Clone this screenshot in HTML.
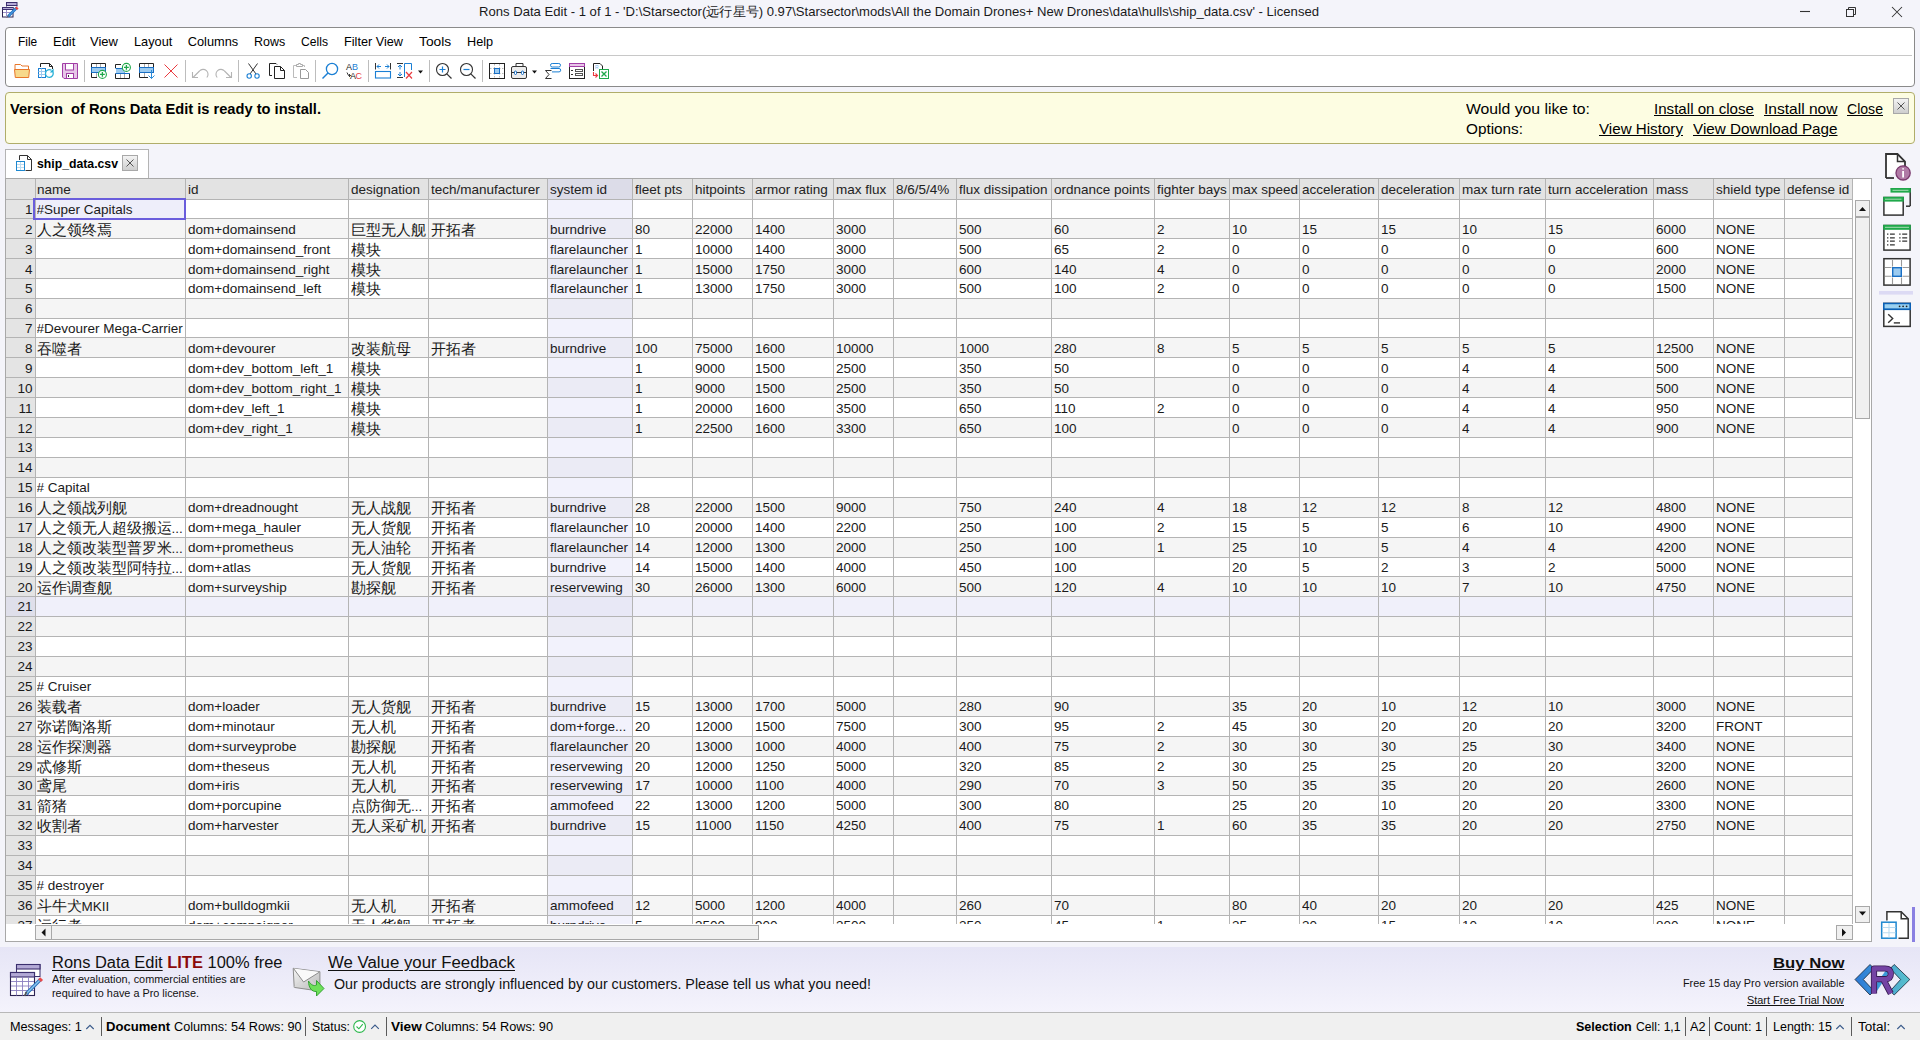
<!DOCTYPE html><html><head><meta charset="utf-8"><style>
*{margin:0;padding:0;box-sizing:border-box}
html,body{width:1920px;height:1040px;overflow:hidden}
body{position:relative;background:#f4f4fa;font-family:"Liberation Sans",sans-serif;color:#000}
div{position:absolute}
.t{white-space:pre;line-height:1}
.cj{font-size:14.5px}
.g{font-size:13.5px;color:#1a1a1a;white-space:pre;line-height:20px;overflow:hidden}
.u{text-decoration:underline;text-underline-offset:1.5px}
.u0{text-decoration:underline}
</style></head><body>
<div class="t" id="f0" style="transform:scaleX(1.0071);transform-origin:0 0;left:479.48px;top:5.00px;font-size:13px;font-weight:400;color:#1a1a1a;">Rons Data Edit - 1 of 1 - 'D:\Starsector(<span style="font-size:12.5px">远行星号</span>) 0.97\Starsector\mods\All the Domain Drones+ New Drones\data\hulls\ship_data.csv' - Licensed</div>
<div style="position:absolute;left:5px;top:27px;width:1910px;height:60px;background:#fff;border:1px solid #8a8a8a;border-radius:4px"></div>
<div style="position:absolute;left:8px;top:55px;width:1904px;height:1px;background:#c8c8c8"></div>
<svg style="position:absolute;left:0;top:0" width="640" height="90" fill="none" stroke-width="1">
<!-- folder -->
<path d="M15 69.5V64.5H20.5L22 66H28.5V69.5" stroke="#e8772a" fill="#fff"/>
<path d="M14.5 69.5H29.5L28.7 77.5H15.3Z" stroke="#e8772a" fill="#f7d98b"/>
<!-- reload doc -->
<path d="M40.5 67V63.5H49.5L52.5 66.5V69" stroke="#222"/>
<path d="M49.5 63.5V66.5H52.5" stroke="#222"/>
<rect x="38.5" y="68.5" width="7" height="9" stroke="#1a7fd4" fill="#fff"/>
<path d="M38.5 71.5H45.5M38.5 74.5H45.5M41.5 68.5V77.5" stroke="#9cc8ee"/>
<path d="M53 72.2A3.9 3.9 0 1 1 51.5 70.3" stroke="#27b0d6" stroke-width="1.3"/>
<path d="M53.6 68.6V72.4H49.8Z" fill="#27b0d6"/>
<!-- floppy -->
<path d="M62.5 63.5H77.5V78.5H64L62.5 77Z" stroke="#a23ea6" fill="#e7c6e8"/>
<rect x="65.5" y="63.5" width="8" height="6.5" stroke="#a23ea6" fill="#fff"/>
<rect x="66.5" y="73.5" width="7" height="5" stroke="#a23ea6" fill="#fff"/>
<path d="M68.5 75V77" stroke="#333"/>
<!-- table add -->
<path d="M91.5 67V63.5H105.5V67M91.5 72.5V77.5H97" stroke="#222"/>
<path d="M96.5 64V67M100.5 64V67M96.5 73V77" stroke="#aaa"/>
<rect x="91.5" y="67.5" width="14" height="5" stroke="#1a6fc4" fill="#9ccbf0"/>
<circle cx="102.4" cy="74.4" r="4" stroke="#1fa84a" fill="#fff" stroke-width="1.1"/>
<path d="M102.4 72V76.8M100 74.4H104.8" stroke="#1fa84a" stroke-width="1.3"/>
<!-- table add 2 -->
<path d="M115.5 68V64.5H121M115.5 73.5V78.5H129.5V73.5" stroke="#222"/>
<path d="M120.5 74V78M124.5 74V78" stroke="#aaa"/>
<path d="M115.5 68.5H122L125 73.5H129.5" stroke="#1a6fc4" fill="none"/>
<path d="M116 69H122L125 73H116Z" fill="#9ccbf0"/>
<path d="M115.5 73.5H129.5" stroke="#1a6fc4"/>
<circle cx="126.4" cy="67.4" r="4" stroke="#1fa84a" fill="#fff" stroke-width="1.1"/>
<path d="M126.4 65V69.8M124 67.4H128.8" stroke="#1fa84a" stroke-width="1.3"/>
<!-- table down -->
<path d="M139.5 67V63.5H153.5V67M139.5 72.5V77.5H148" stroke="#222"/>
<path d="M144.5 64V67M148.5 64V67M144.5 73V77" stroke="#aaa"/>
<rect x="139.5" y="67.5" width="14" height="5" stroke="#1a6fc4" fill="#9ccbf0"/>
<path d="M151.5 70V78.5M148.5 75.5L151.5 78.5L154.5 75.5" stroke="#2a8ad8" fill="none"/>
<!-- red X -->
<path d="M164.5 64.5L177.5 77.5M177.5 64.5L164.5 77.5" stroke="#ea3a3f"/>
<!-- seps -->
<path d="M84.5 60V82M185.5 60V82M238.5 60V82M315.5 60V82M368.5 60V82M429.5 60V82M482.5 60V82" stroke="#bdbdbd"/>
<!-- undo/redo -->
<path d="M193 77.5L199.5 71A4.2 4.2 0 0 1 206.8 77.5" stroke="#b4b4b4" stroke-width="1.1"/>
<path d="M192.5 72V77.5H198" stroke="#b4b4b4" stroke-width="1.1"/>
<path d="M231 77.5L224.5 71A4.2 4.2 0 0 0 217.2 77.5" stroke="#b4b4b4" stroke-width="1.1"/>
<path d="M231.5 72V77.5H226" stroke="#b4b4b4" stroke-width="1.1"/>
<!-- scissors -->
<path d="M248.5 63.5L256 74M257.5 63.5L250 74" stroke="#333"/>
<circle cx="249.2" cy="76" r="2.2" stroke="#1a7fd4" stroke-width="1.1"/>
<circle cx="257" cy="76" r="2.2" stroke="#1a7fd4" stroke-width="1.1"/>
<!-- copy -->
<path d="M272 75.5H269.5V63.5H276L277 64.5" stroke="#222"/>
<path d="M274.5 78.5V66.5H280.5L284.5 70.5V78.5Z" stroke="#222" fill="#fff"/>
<path d="M280.5 66.5V70.5H284.5" stroke="#222"/>
<!-- paste -->
<path d="M297 77.5H293.5V65.5H304.5V67" stroke="#bbb"/>
<path d="M296.5 66.5V64.5H298.5V63.5H300.5V64.5H302.5V66.5Z" stroke="#aaa" fill="#fff"/>
<path d="M300.5 78.5V69.5H305.5L308.5 72.5V78.5Z" stroke="#999" fill="#fff"/>
<!-- find -->
<circle cx="332" cy="69" r="5.6" stroke="#1a7fd4" stroke-width="1.3"/>
<path d="M328 73L322.5 78.5" stroke="#1a7fd4" stroke-width="1.4"/>
<!-- spell -->
<text x="346" y="69.5" font-family="Liberation Sans" font-size="9" fill="#222">A<tspan fill="#1a7fd4">B</tspan></text>
<text x="350" y="78.8" font-family="Liberation Sans" font-size="9" fill="#222" letter-spacing="-0.5">A<tspan fill="#ea3a3f">C</tspan></text>
<path d="M347 72.5L348.5 75.5H350.5M349 74L350.5 75.5L349 77" stroke="#222" stroke-width="0.9"/>
<!-- col width -->
<path d="M375.5 63V69.5M390.5 63V69.5" stroke="#333"/>
<path d="M377 66.5H381M379 64.5L377 66.5L379 68.5M389 66.5H385M387 64.5L389 66.5L387 68.5" stroke="#1a7fd4"/>
<rect x="375.5" y="71.5" width="15" height="6.5" stroke="#1a7fd4" fill="#fff" stroke-width="1.1"/>
<!-- row height x -->
<path d="M397 63.5H403M397 77.5H403" stroke="#333"/>
<path d="M400 65V69.5M398 67L400 65L402 67M400 72V76M398 74L400 76L402 74" stroke="#1a7fd4"/>
<path d="M404.5 77V63.5H411.5V70" stroke="#1a7fd4"/>
<path d="M406 72L412 78.5M412 72L406 78.5" stroke="#ea3a3f" stroke-width="1.2"/>
<path d="M418 70.5H423L420.5 73.5Z" fill="#111"/>
<!-- zoom in/out -->
<circle cx="442.5" cy="69.5" r="6" stroke="#333" stroke-width="1.1"/>
<path d="M446.8 73.8L451.5 78.5" stroke="#333" stroke-width="1.2"/>
<path d="M442.5 66.5V72.5M439.5 69.5H445.5" stroke="#1a7fd4" stroke-width="1.2"/>
<circle cx="466.5" cy="69.5" r="6" stroke="#333" stroke-width="1.1"/>
<path d="M470.8 73.8L475.5 78.5" stroke="#333" stroke-width="1.2"/>
<path d="M463.5 69.5H469.5" stroke="#1a7fd4" stroke-width="1.2"/>
<!-- grid -->
<rect x="489.5" y="63.5" width="15" height="15" stroke="#222" fill="#fff"/>
<path d="M494.5 64V78M499.5 64V78M490 68.5H504M490 73.5H504" stroke="#bbb" stroke-dasharray="1.5 1.5"/>
<rect x="494.5" y="68.5" width="5" height="5" stroke="#1a6fc4" fill="#9ccbf0"/>
<!-- toolbox -->
<path d="M516 66V63.5H523V66" stroke="#333"/>
<rect x="511.5" y="66.5" width="15" height="12" rx="1.5" stroke="#333" fill="#ececec"/>
<path d="M512 72.5H526" stroke="#333"/>
<rect x="514.5" y="71" width="2" height="3.5" rx="1" stroke="#1a6fc4" fill="#fff"/>
<rect x="521.5" y="71" width="2" height="3.5" rx="1" stroke="#1a6fc4" fill="#fff"/>
<path d="M532 70.5H537L534.5 73.5Z" fill="#111"/>
<!-- sigma -->
<path d="M551.5 70.5H545.5L549 74.5L545.5 78.5H551.5" stroke="#333"/>
<rect x="550.5" y="63.5" width="10" height="3.5" rx="1.7" stroke="#1a7fd4"/>
<path d="M550.5 68.5H559A1.7 1.7 0 0 1 559 71.9H552" stroke="#1a7fd4"/>
<!-- list form -->
<rect x="569.5" y="63.5" width="15" height="15" stroke="#222" fill="#fff"/>
<rect x="569.5" y="63.5" width="15" height="3" stroke="#a23ea6" fill="#e7c6e8"/>
<path d="M571 70.5H573M571 74.5H573" stroke="#333"/>
<rect x="575.5" y="69.5" width="7" height="2" stroke="#555"/>
<rect x="575.5" y="73.5" width="7" height="2" stroke="#555"/>
<!-- export -->
<path d="M593.5 71V63.5H600L602.5 66V69" stroke="#222"/>
<text x="595" y="69" font-family="Liberation Sans" font-size="5" fill="#7ab8ee">R</text>
<path d="M593.5 72V75.5H597M595.5 73.5L597.5 75.5L595.5 77.5" stroke="#ea3a3f" stroke-width="1.1"/>
<rect x="599.5" y="69.5" width="9" height="9" stroke="#1fa84a" fill="#fff"/>
<path d="M601.5 71.5L606.5 76.5M606.5 71.5L601.5 76.5" stroke="#1fa84a" stroke-width="1.3"/>
</svg>
<div class="t" id="f1" style="transform:scaleX(0.9309);transform-origin:0 0;left:18.29px;top:36.16px;font-size:12.8px;font-weight:400;color:#000;">File</div>
<div class="t" id="f2" style="transform:scaleX(1.0108);transform-origin:0 0;left:53.29px;top:36.16px;font-size:12.8px;font-weight:400;color:#000;">Edit</div>
<div class="t" id="f3" style="transform:scaleX(1.0103);transform-origin:0 0;left:90.49px;top:36.16px;font-size:12.8px;font-weight:400;color:#000;">View</div>
<div class="t" id="f4" style="transform:scaleX(0.9964);transform-origin:0 0;left:134.09px;top:36.16px;font-size:12.8px;font-weight:400;color:#000;">Layout</div>
<div class="t" id="f5" style="transform:scaleX(1.0000);transform-origin:0 0;left:187.69px;top:36.16px;font-size:12.8px;font-weight:400;color:#000;">Columns</div>
<div class="t" id="f6" style="transform:scaleX(0.9750);transform-origin:0 0;left:253.89px;top:36.16px;font-size:12.8px;font-weight:400;color:#000;">Rows</div>
<div class="t" id="f7" style="transform:scaleX(0.9489);transform-origin:0 0;left:301.09px;top:36.16px;font-size:12.8px;font-weight:400;color:#000;">Cells</div>
<div class="t" id="f8" style="transform:scaleX(0.9916);transform-origin:0 0;left:344.29px;top:36.16px;font-size:12.8px;font-weight:400;color:#000;">Filter View</div>
<div class="t" id="f9" style="transform:scaleX(1.0778);transform-origin:0 0;left:418.69px;top:36.16px;font-size:12.8px;font-weight:400;color:#000;">Tools</div>
<div class="t" id="f10" style="transform:scaleX(0.9913);transform-origin:0 0;left:467.39px;top:36.16px;font-size:12.8px;font-weight:400;color:#000;">Help</div>
<div style="position:absolute;left:5px;top:92px;width:1910px;height:52px;background:#fdfde2;border:1px solid #b0ad6a;border-radius:4px"></div>
<div class="t" id="f11" style="transform:scaleX(1.0039);transform-origin:0 0;left:10.42px;top:101.64px;font-size:14.6px;font-weight:700;color:#000;">Version  of Rons Data Edit is ready to install.</div>
<div class="t" id="f12" style="transform:scaleX(1.0497);transform-origin:0 0;left:1466.40px;top:101.30px;font-size:15px;font-weight:400;color:#000;">Would you like to:</div>
<div class="t" id="f13" style="transform:scaleX(1.0201);transform-origin:0 0;left:1466.40px;top:121.30px;font-size:15px;font-weight:400;color:#000;">Options:</div>
<div class="t" id="f14" style="transform:scaleX(1.0077);transform-origin:0 0;left:1653.60px;top:101.30px;font-size:15px;font-weight:400;color:#000;text-decoration:underline">Install on close</div>
<div class="t" id="f15" style="transform:scaleX(1.0370);transform-origin:0 0;left:1763.60px;top:101.30px;font-size:15px;font-weight:400;color:#000;text-decoration:underline">Install now</div>
<div class="t" id="f16" style="transform:scaleX(0.9385);transform-origin:0 0;left:1846.90px;top:101.30px;font-size:15px;font-weight:400;color:#000;text-decoration:underline">Close</div>
<div class="t" id="f17" style="transform:scaleX(1.0109);transform-origin:0 0;left:1599.40px;top:121.30px;font-size:15px;font-weight:400;color:#000;text-decoration:underline">View History</div>
<div class="t" id="f18" style="transform:scaleX(1.0153);transform-origin:0 0;left:1692.60px;top:121.30px;font-size:15px;font-weight:400;color:#000;text-decoration:underline">View Download Page</div>
<div style="position:absolute;left:5px;top:149px;width:144px;height:31px;background:#fff;border:1px solid #b4b4b4;border-bottom:none"></div>
<div class="t" id="f19" style="transform:scaleX(0.9419);transform-origin:0 0;left:36.58px;top:156.50px;font-size:13px;font-weight:700;color:#000;">ship_data.csv</div>
<div style="position:absolute;left:5px;top:178px;width:1867px;height:764px;background:#fff;border:1px solid #a8a8a8"></div>
<div style="position:absolute;left:6px;top:179px;width:1846px;height:20px;background:#e3e3e3"></div>
<div style="position:absolute;left:548px;top:179px;width:84px;height:20px;background:#dcdce8"></div>
<div style="position:absolute;left:36px;top:200px;width:1816px;height:18px;background:#ffffff"></div>
<div style="position:absolute;left:6px;top:200px;width:29px;height:18px;background:#e4e4e4"></div>
<div style="position:absolute;left:548px;top:200px;width:84px;height:18px;background:#f2f2fc"></div>
<div style="position:absolute;left:35px;top:200px;width:150px;height:18px;background:#eeeefa"></div>
<div style="position:absolute;left:36px;top:219px;width:1816px;height:19px;background:#f5f5f5"></div>
<div style="position:absolute;left:6px;top:219px;width:29px;height:19px;background:#e4e4e4"></div>
<div style="position:absolute;left:548px;top:219px;width:84px;height:19px;background:#ebebf5"></div>
<div style="position:absolute;left:36px;top:239px;width:1816px;height:19px;background:#ffffff"></div>
<div style="position:absolute;left:6px;top:239px;width:29px;height:19px;background:#e4e4e4"></div>
<div style="position:absolute;left:548px;top:239px;width:84px;height:19px;background:#f2f2fc"></div>
<div style="position:absolute;left:36px;top:259px;width:1816px;height:19px;background:#f5f5f5"></div>
<div style="position:absolute;left:6px;top:259px;width:29px;height:19px;background:#e4e4e4"></div>
<div style="position:absolute;left:548px;top:259px;width:84px;height:19px;background:#ebebf5"></div>
<div style="position:absolute;left:36px;top:279px;width:1816px;height:19px;background:#ffffff"></div>
<div style="position:absolute;left:6px;top:279px;width:29px;height:19px;background:#e4e4e4"></div>
<div style="position:absolute;left:548px;top:279px;width:84px;height:19px;background:#f2f2fc"></div>
<div style="position:absolute;left:36px;top:299px;width:1816px;height:19px;background:#f5f5f5"></div>
<div style="position:absolute;left:6px;top:299px;width:29px;height:19px;background:#e4e4e4"></div>
<div style="position:absolute;left:548px;top:299px;width:84px;height:19px;background:#ebebf5"></div>
<div style="position:absolute;left:36px;top:319px;width:1816px;height:18px;background:#ffffff"></div>
<div style="position:absolute;left:6px;top:319px;width:29px;height:18px;background:#e4e4e4"></div>
<div style="position:absolute;left:548px;top:319px;width:84px;height:18px;background:#f2f2fc"></div>
<div style="position:absolute;left:36px;top:338px;width:1816px;height:19px;background:#f5f5f5"></div>
<div style="position:absolute;left:6px;top:338px;width:29px;height:19px;background:#e4e4e4"></div>
<div style="position:absolute;left:548px;top:338px;width:84px;height:19px;background:#ebebf5"></div>
<div style="position:absolute;left:36px;top:358px;width:1816px;height:19px;background:#ffffff"></div>
<div style="position:absolute;left:6px;top:358px;width:29px;height:19px;background:#e4e4e4"></div>
<div style="position:absolute;left:548px;top:358px;width:84px;height:19px;background:#f2f2fc"></div>
<div style="position:absolute;left:36px;top:378px;width:1816px;height:19px;background:#f5f5f5"></div>
<div style="position:absolute;left:6px;top:378px;width:29px;height:19px;background:#e4e4e4"></div>
<div style="position:absolute;left:548px;top:378px;width:84px;height:19px;background:#ebebf5"></div>
<div style="position:absolute;left:36px;top:398px;width:1816px;height:19px;background:#ffffff"></div>
<div style="position:absolute;left:6px;top:398px;width:29px;height:19px;background:#e4e4e4"></div>
<div style="position:absolute;left:548px;top:398px;width:84px;height:19px;background:#f2f2fc"></div>
<div style="position:absolute;left:36px;top:418px;width:1816px;height:19px;background:#f5f5f5"></div>
<div style="position:absolute;left:6px;top:418px;width:29px;height:19px;background:#e4e4e4"></div>
<div style="position:absolute;left:548px;top:418px;width:84px;height:19px;background:#ebebf5"></div>
<div style="position:absolute;left:36px;top:438px;width:1816px;height:19px;background:#ffffff"></div>
<div style="position:absolute;left:6px;top:438px;width:29px;height:19px;background:#e4e4e4"></div>
<div style="position:absolute;left:548px;top:438px;width:84px;height:19px;background:#f2f2fc"></div>
<div style="position:absolute;left:36px;top:458px;width:1816px;height:19px;background:#f5f5f5"></div>
<div style="position:absolute;left:6px;top:458px;width:29px;height:19px;background:#e4e4e4"></div>
<div style="position:absolute;left:548px;top:458px;width:84px;height:19px;background:#ebebf5"></div>
<div style="position:absolute;left:36px;top:478px;width:1816px;height:19px;background:#ffffff"></div>
<div style="position:absolute;left:6px;top:478px;width:29px;height:19px;background:#e4e4e4"></div>
<div style="position:absolute;left:548px;top:478px;width:84px;height:19px;background:#f2f2fc"></div>
<div style="position:absolute;left:36px;top:498px;width:1816px;height:19px;background:#f5f5f5"></div>
<div style="position:absolute;left:6px;top:498px;width:29px;height:19px;background:#e4e4e4"></div>
<div style="position:absolute;left:548px;top:498px;width:84px;height:19px;background:#ebebf5"></div>
<div style="position:absolute;left:36px;top:518px;width:1816px;height:19px;background:#ffffff"></div>
<div style="position:absolute;left:6px;top:518px;width:29px;height:19px;background:#e4e4e4"></div>
<div style="position:absolute;left:548px;top:518px;width:84px;height:19px;background:#f2f2fc"></div>
<div style="position:absolute;left:36px;top:538px;width:1816px;height:19px;background:#f5f5f5"></div>
<div style="position:absolute;left:6px;top:538px;width:29px;height:19px;background:#e4e4e4"></div>
<div style="position:absolute;left:548px;top:538px;width:84px;height:19px;background:#ebebf5"></div>
<div style="position:absolute;left:36px;top:558px;width:1816px;height:18px;background:#ffffff"></div>
<div style="position:absolute;left:6px;top:558px;width:29px;height:18px;background:#e4e4e4"></div>
<div style="position:absolute;left:548px;top:558px;width:84px;height:18px;background:#f2f2fc"></div>
<div style="position:absolute;left:36px;top:577px;width:1816px;height:19px;background:#f5f5f5"></div>
<div style="position:absolute;left:6px;top:577px;width:29px;height:19px;background:#e4e4e4"></div>
<div style="position:absolute;left:548px;top:577px;width:84px;height:19px;background:#ebebf5"></div>
<div style="position:absolute;left:36px;top:597px;width:1816px;height:19px;background:#f0f0fa"></div>
<div style="position:absolute;left:6px;top:597px;width:29px;height:19px;background:#dfdfea"></div>
<div style="position:absolute;left:548px;top:597px;width:84px;height:19px;background:#e8e8f6"></div>
<div style="position:absolute;left:36px;top:617px;width:1816px;height:19px;background:#f5f5f5"></div>
<div style="position:absolute;left:6px;top:617px;width:29px;height:19px;background:#e4e4e4"></div>
<div style="position:absolute;left:548px;top:617px;width:84px;height:19px;background:#ebebf5"></div>
<div style="position:absolute;left:36px;top:637px;width:1816px;height:19px;background:#ffffff"></div>
<div style="position:absolute;left:6px;top:637px;width:29px;height:19px;background:#e4e4e4"></div>
<div style="position:absolute;left:548px;top:637px;width:84px;height:19px;background:#f2f2fc"></div>
<div style="position:absolute;left:36px;top:657px;width:1816px;height:19px;background:#f5f5f5"></div>
<div style="position:absolute;left:6px;top:657px;width:29px;height:19px;background:#e4e4e4"></div>
<div style="position:absolute;left:548px;top:657px;width:84px;height:19px;background:#ebebf5"></div>
<div style="position:absolute;left:36px;top:677px;width:1816px;height:19px;background:#ffffff"></div>
<div style="position:absolute;left:6px;top:677px;width:29px;height:19px;background:#e4e4e4"></div>
<div style="position:absolute;left:548px;top:677px;width:84px;height:19px;background:#f2f2fc"></div>
<div style="position:absolute;left:36px;top:697px;width:1816px;height:19px;background:#f5f5f5"></div>
<div style="position:absolute;left:6px;top:697px;width:29px;height:19px;background:#e4e4e4"></div>
<div style="position:absolute;left:548px;top:697px;width:84px;height:19px;background:#ebebf5"></div>
<div style="position:absolute;left:36px;top:717px;width:1816px;height:19px;background:#ffffff"></div>
<div style="position:absolute;left:6px;top:717px;width:29px;height:19px;background:#e4e4e4"></div>
<div style="position:absolute;left:548px;top:717px;width:84px;height:19px;background:#f2f2fc"></div>
<div style="position:absolute;left:36px;top:737px;width:1816px;height:19px;background:#f5f5f5"></div>
<div style="position:absolute;left:6px;top:737px;width:29px;height:19px;background:#e4e4e4"></div>
<div style="position:absolute;left:548px;top:737px;width:84px;height:19px;background:#ebebf5"></div>
<div style="position:absolute;left:36px;top:757px;width:1816px;height:19px;background:#ffffff"></div>
<div style="position:absolute;left:6px;top:757px;width:29px;height:19px;background:#e4e4e4"></div>
<div style="position:absolute;left:548px;top:757px;width:84px;height:19px;background:#f2f2fc"></div>
<div style="position:absolute;left:36px;top:777px;width:1816px;height:18px;background:#f5f5f5"></div>
<div style="position:absolute;left:6px;top:777px;width:29px;height:18px;background:#e4e4e4"></div>
<div style="position:absolute;left:548px;top:777px;width:84px;height:18px;background:#ebebf5"></div>
<div style="position:absolute;left:36px;top:796px;width:1816px;height:19px;background:#ffffff"></div>
<div style="position:absolute;left:6px;top:796px;width:29px;height:19px;background:#e4e4e4"></div>
<div style="position:absolute;left:548px;top:796px;width:84px;height:19px;background:#f2f2fc"></div>
<div style="position:absolute;left:36px;top:816px;width:1816px;height:19px;background:#f5f5f5"></div>
<div style="position:absolute;left:6px;top:816px;width:29px;height:19px;background:#e4e4e4"></div>
<div style="position:absolute;left:548px;top:816px;width:84px;height:19px;background:#ebebf5"></div>
<div style="position:absolute;left:36px;top:836px;width:1816px;height:19px;background:#ffffff"></div>
<div style="position:absolute;left:6px;top:836px;width:29px;height:19px;background:#e4e4e4"></div>
<div style="position:absolute;left:548px;top:836px;width:84px;height:19px;background:#f2f2fc"></div>
<div style="position:absolute;left:36px;top:856px;width:1816px;height:19px;background:#f5f5f5"></div>
<div style="position:absolute;left:6px;top:856px;width:29px;height:19px;background:#e4e4e4"></div>
<div style="position:absolute;left:548px;top:856px;width:84px;height:19px;background:#ebebf5"></div>
<div style="position:absolute;left:36px;top:876px;width:1816px;height:19px;background:#ffffff"></div>
<div style="position:absolute;left:6px;top:876px;width:29px;height:19px;background:#e4e4e4"></div>
<div style="position:absolute;left:548px;top:876px;width:84px;height:19px;background:#f2f2fc"></div>
<div style="position:absolute;left:36px;top:896px;width:1816px;height:19px;background:#f5f5f5"></div>
<div style="position:absolute;left:6px;top:896px;width:29px;height:19px;background:#e4e4e4"></div>
<div style="position:absolute;left:548px;top:896px;width:84px;height:19px;background:#ebebf5"></div>
<div style="position:absolute;left:36px;top:916px;width:1816px;height:8px;background:#ffffff"></div>
<div style="position:absolute;left:6px;top:916px;width:29px;height:8px;background:#e4e4e4"></div>
<div style="position:absolute;left:548px;top:916px;width:84px;height:8px;background:#f2f2fc"></div>
<div style="position:absolute;left:35px;top:179px;width:1px;height:745px;background:#b4b4b4"></div>
<div style="position:absolute;left:185px;top:179px;width:1px;height:745px;background:#b4b4b4"></div>
<div style="position:absolute;left:348px;top:179px;width:1px;height:745px;background:#b4b4b4"></div>
<div style="position:absolute;left:428px;top:179px;width:1px;height:745px;background:#b4b4b4"></div>
<div style="position:absolute;left:547px;top:179px;width:1px;height:745px;background:#b4b4b4"></div>
<div style="position:absolute;left:632px;top:179px;width:1px;height:745px;background:#b4b4b4"></div>
<div style="position:absolute;left:692px;top:179px;width:1px;height:745px;background:#b4b4b4"></div>
<div style="position:absolute;left:752px;top:179px;width:1px;height:745px;background:#b4b4b4"></div>
<div style="position:absolute;left:833px;top:179px;width:1px;height:745px;background:#b4b4b4"></div>
<div style="position:absolute;left:893px;top:179px;width:1px;height:745px;background:#b4b4b4"></div>
<div style="position:absolute;left:956px;top:179px;width:1px;height:745px;background:#b4b4b4"></div>
<div style="position:absolute;left:1051px;top:179px;width:1px;height:745px;background:#b4b4b4"></div>
<div style="position:absolute;left:1154px;top:179px;width:1px;height:745px;background:#b4b4b4"></div>
<div style="position:absolute;left:1229px;top:179px;width:1px;height:745px;background:#b4b4b4"></div>
<div style="position:absolute;left:1299px;top:179px;width:1px;height:745px;background:#b4b4b4"></div>
<div style="position:absolute;left:1378px;top:179px;width:1px;height:745px;background:#b4b4b4"></div>
<div style="position:absolute;left:1459px;top:179px;width:1px;height:745px;background:#b4b4b4"></div>
<div style="position:absolute;left:1545px;top:179px;width:1px;height:745px;background:#b4b4b4"></div>
<div style="position:absolute;left:1653px;top:179px;width:1px;height:745px;background:#b4b4b4"></div>
<div style="position:absolute;left:1713px;top:179px;width:1px;height:745px;background:#b4b4b4"></div>
<div style="position:absolute;left:1784px;top:179px;width:1px;height:745px;background:#b4b4b4"></div>
<div style="position:absolute;left:1852px;top:179px;width:1px;height:745px;background:#b4b4b4"></div>
<div style="position:absolute;left:6px;top:199px;width:1847px;height:1px;background:#b4b4b4"></div>
<div style="position:absolute;left:6px;top:218px;width:1847px;height:1px;background:#b4b4b4"></div>
<div style="position:absolute;left:6px;top:238px;width:1847px;height:1px;background:#b4b4b4"></div>
<div style="position:absolute;left:6px;top:258px;width:1847px;height:1px;background:#b4b4b4"></div>
<div style="position:absolute;left:6px;top:278px;width:1847px;height:1px;background:#b4b4b4"></div>
<div style="position:absolute;left:6px;top:298px;width:1847px;height:1px;background:#b4b4b4"></div>
<div style="position:absolute;left:6px;top:318px;width:1847px;height:1px;background:#b4b4b4"></div>
<div style="position:absolute;left:6px;top:337px;width:1847px;height:1px;background:#b4b4b4"></div>
<div style="position:absolute;left:6px;top:357px;width:1847px;height:1px;background:#b4b4b4"></div>
<div style="position:absolute;left:6px;top:377px;width:1847px;height:1px;background:#b4b4b4"></div>
<div style="position:absolute;left:6px;top:397px;width:1847px;height:1px;background:#b4b4b4"></div>
<div style="position:absolute;left:6px;top:417px;width:1847px;height:1px;background:#b4b4b4"></div>
<div style="position:absolute;left:6px;top:437px;width:1847px;height:1px;background:#b4b4b4"></div>
<div style="position:absolute;left:6px;top:457px;width:1847px;height:1px;background:#b4b4b4"></div>
<div style="position:absolute;left:6px;top:477px;width:1847px;height:1px;background:#b4b4b4"></div>
<div style="position:absolute;left:6px;top:497px;width:1847px;height:1px;background:#b4b4b4"></div>
<div style="position:absolute;left:6px;top:517px;width:1847px;height:1px;background:#b4b4b4"></div>
<div style="position:absolute;left:6px;top:537px;width:1847px;height:1px;background:#b4b4b4"></div>
<div style="position:absolute;left:6px;top:557px;width:1847px;height:1px;background:#b4b4b4"></div>
<div style="position:absolute;left:6px;top:576px;width:1847px;height:1px;background:#b4b4b4"></div>
<div style="position:absolute;left:6px;top:596px;width:1847px;height:1px;background:#b4b4b4"></div>
<div style="position:absolute;left:6px;top:616px;width:1847px;height:1px;background:#b4b4b4"></div>
<div style="position:absolute;left:6px;top:636px;width:1847px;height:1px;background:#b4b4b4"></div>
<div style="position:absolute;left:6px;top:656px;width:1847px;height:1px;background:#b4b4b4"></div>
<div style="position:absolute;left:6px;top:676px;width:1847px;height:1px;background:#b4b4b4"></div>
<div style="position:absolute;left:6px;top:696px;width:1847px;height:1px;background:#b4b4b4"></div>
<div style="position:absolute;left:6px;top:716px;width:1847px;height:1px;background:#b4b4b4"></div>
<div style="position:absolute;left:6px;top:736px;width:1847px;height:1px;background:#b4b4b4"></div>
<div style="position:absolute;left:6px;top:756px;width:1847px;height:1px;background:#b4b4b4"></div>
<div style="position:absolute;left:6px;top:776px;width:1847px;height:1px;background:#b4b4b4"></div>
<div style="position:absolute;left:6px;top:795px;width:1847px;height:1px;background:#b4b4b4"></div>
<div style="position:absolute;left:6px;top:815px;width:1847px;height:1px;background:#b4b4b4"></div>
<div style="position:absolute;left:6px;top:835px;width:1847px;height:1px;background:#b4b4b4"></div>
<div style="position:absolute;left:6px;top:855px;width:1847px;height:1px;background:#b4b4b4"></div>
<div style="position:absolute;left:6px;top:875px;width:1847px;height:1px;background:#b4b4b4"></div>
<div style="position:absolute;left:6px;top:895px;width:1847px;height:1px;background:#b4b4b4"></div>
<div style="position:absolute;left:6px;top:915px;width:1847px;height:1px;background:#b4b4b4"></div>
<div class="g" style="left:37px;top:180px;width:147px;height:19px;color:#222">name</div>
<div class="g" style="left:188px;top:180px;width:160px;height:19px;color:#222">id</div>
<div class="g" style="left:351px;top:180px;width:77px;height:19px;color:#222">designation</div>
<div class="g" style="left:431px;top:180px;width:116px;height:19px;color:#222">tech/manufacturer</div>
<div class="g" style="left:550px;top:180px;width:82px;height:19px;color:#222">system id</div>
<div class="g" style="left:635px;top:180px;width:57px;height:19px;color:#222">fleet pts</div>
<div class="g" style="left:695px;top:180px;width:57px;height:19px;color:#222">hitpoints</div>
<div class="g" style="left:755px;top:180px;width:78px;height:19px;color:#222">armor rating</div>
<div class="g" style="left:836px;top:180px;width:57px;height:19px;color:#222">max flux</div>
<div class="g" style="left:896px;top:180px;width:60px;height:19px;color:#222">8/6/5/4%</div>
<div class="g" style="left:959px;top:180px;width:92px;height:19px;color:#222">flux dissipation</div>
<div class="g" style="left:1054px;top:180px;width:100px;height:19px;color:#222">ordnance points</div>
<div class="g" style="left:1157px;top:180px;width:72px;height:19px;color:#222">fighter bays</div>
<div class="g" style="left:1232px;top:180px;width:67px;height:19px;color:#222">max speed</div>
<div class="g" style="left:1302px;top:180px;width:76px;height:19px;color:#222">acceleration</div>
<div class="g" style="left:1381px;top:180px;width:78px;height:19px;color:#222">deceleration</div>
<div class="g" style="left:1462px;top:180px;width:83px;height:19px;color:#222">max turn rate</div>
<div class="g" style="left:1548px;top:180px;width:105px;height:19px;color:#222">turn acceleration</div>
<div class="g" style="left:1656px;top:180px;width:57px;height:19px;color:#222">mass</div>
<div class="g" style="left:1716px;top:180px;width:68px;height:19px;color:#222">shield type</div>
<div class="g" style="left:1787px;top:180px;width:65px;height:19px;color:#222">defense id</div>
<div class="g" style="left:6px;top:200px;width:26.5px;height:18px;text-align:right">1</div>
<div class="g" style="left:36.5px;top:200px;width:400px;height:18px">#Super Capitals</div>
<div class="g" style="left:6px;top:220px;width:26.5px;height:18px;text-align:right">2</div>
<div class="g" style="left:36.5px;top:220px;width:147px;height:18px"><span class="cj">人之领终焉</span></div>
<div class="g" style="left:188px;top:220px;width:160px;height:18px">dom+domainsend</div>
<div class="g" style="left:351px;top:220px;width:77px;height:18px"><span class="cj">巨型无人舰</span></div>
<div class="g" style="left:431px;top:220px;width:116px;height:18px"><span class="cj">开拓者</span></div>
<div class="g" style="left:550px;top:220px;width:82px;height:18px">burndrive</div>
<div class="g" style="left:635px;top:220px;width:57px;height:18px">80</div>
<div class="g" style="left:695px;top:220px;width:57px;height:18px">22000</div>
<div class="g" style="left:755px;top:220px;width:78px;height:18px">1400</div>
<div class="g" style="left:836px;top:220px;width:57px;height:18px">3000</div>
<div class="g" style="left:959px;top:220px;width:92px;height:18px">500</div>
<div class="g" style="left:1054px;top:220px;width:100px;height:18px">60</div>
<div class="g" style="left:1157px;top:220px;width:72px;height:18px">2</div>
<div class="g" style="left:1232px;top:220px;width:67px;height:18px">10</div>
<div class="g" style="left:1302px;top:220px;width:76px;height:18px">15</div>
<div class="g" style="left:1381px;top:220px;width:78px;height:18px">15</div>
<div class="g" style="left:1462px;top:220px;width:83px;height:18px">10</div>
<div class="g" style="left:1548px;top:220px;width:105px;height:18px">15</div>
<div class="g" style="left:1656px;top:220px;width:57px;height:18px">6000</div>
<div class="g" style="left:1716px;top:220px;width:68px;height:18px">NONE</div>
<div class="g" style="left:6px;top:240px;width:26.5px;height:18px;text-align:right">3</div>
<div class="g" style="left:188px;top:240px;width:160px;height:18px">dom+domainsend_front</div>
<div class="g" style="left:351px;top:240px;width:77px;height:18px"><span class="cj">模块</span></div>
<div class="g" style="left:550px;top:240px;width:82px;height:18px">flarelauncher</div>
<div class="g" style="left:635px;top:240px;width:57px;height:18px">1</div>
<div class="g" style="left:695px;top:240px;width:57px;height:18px">10000</div>
<div class="g" style="left:755px;top:240px;width:78px;height:18px">1400</div>
<div class="g" style="left:836px;top:240px;width:57px;height:18px">3000</div>
<div class="g" style="left:959px;top:240px;width:92px;height:18px">500</div>
<div class="g" style="left:1054px;top:240px;width:100px;height:18px">65</div>
<div class="g" style="left:1157px;top:240px;width:72px;height:18px">2</div>
<div class="g" style="left:1232px;top:240px;width:67px;height:18px">0</div>
<div class="g" style="left:1302px;top:240px;width:76px;height:18px">0</div>
<div class="g" style="left:1381px;top:240px;width:78px;height:18px">0</div>
<div class="g" style="left:1462px;top:240px;width:83px;height:18px">0</div>
<div class="g" style="left:1548px;top:240px;width:105px;height:18px">0</div>
<div class="g" style="left:1656px;top:240px;width:57px;height:18px">600</div>
<div class="g" style="left:1716px;top:240px;width:68px;height:18px">NONE</div>
<div class="g" style="left:6px;top:260px;width:26.5px;height:18px;text-align:right">4</div>
<div class="g" style="left:188px;top:260px;width:160px;height:18px">dom+domainsend_right</div>
<div class="g" style="left:351px;top:260px;width:77px;height:18px"><span class="cj">模块</span></div>
<div class="g" style="left:550px;top:260px;width:82px;height:18px">flarelauncher</div>
<div class="g" style="left:635px;top:260px;width:57px;height:18px">1</div>
<div class="g" style="left:695px;top:260px;width:57px;height:18px">15000</div>
<div class="g" style="left:755px;top:260px;width:78px;height:18px">1750</div>
<div class="g" style="left:836px;top:260px;width:57px;height:18px">3000</div>
<div class="g" style="left:959px;top:260px;width:92px;height:18px">600</div>
<div class="g" style="left:1054px;top:260px;width:100px;height:18px">140</div>
<div class="g" style="left:1157px;top:260px;width:72px;height:18px">4</div>
<div class="g" style="left:1232px;top:260px;width:67px;height:18px">0</div>
<div class="g" style="left:1302px;top:260px;width:76px;height:18px">0</div>
<div class="g" style="left:1381px;top:260px;width:78px;height:18px">0</div>
<div class="g" style="left:1462px;top:260px;width:83px;height:18px">0</div>
<div class="g" style="left:1548px;top:260px;width:105px;height:18px">0</div>
<div class="g" style="left:1656px;top:260px;width:57px;height:18px">2000</div>
<div class="g" style="left:1716px;top:260px;width:68px;height:18px">NONE</div>
<div class="g" style="left:6px;top:279px;width:26.5px;height:19px;text-align:right">5</div>
<div class="g" style="left:188px;top:279px;width:160px;height:19px">dom+domainsend_left</div>
<div class="g" style="left:351px;top:279px;width:77px;height:19px"><span class="cj">模块</span></div>
<div class="g" style="left:550px;top:279px;width:82px;height:19px">flarelauncher</div>
<div class="g" style="left:635px;top:279px;width:57px;height:19px">1</div>
<div class="g" style="left:695px;top:279px;width:57px;height:19px">13000</div>
<div class="g" style="left:755px;top:279px;width:78px;height:19px">1750</div>
<div class="g" style="left:836px;top:279px;width:57px;height:19px">3000</div>
<div class="g" style="left:959px;top:279px;width:92px;height:19px">500</div>
<div class="g" style="left:1054px;top:279px;width:100px;height:19px">100</div>
<div class="g" style="left:1157px;top:279px;width:72px;height:19px">2</div>
<div class="g" style="left:1232px;top:279px;width:67px;height:19px">0</div>
<div class="g" style="left:1302px;top:279px;width:76px;height:19px">0</div>
<div class="g" style="left:1381px;top:279px;width:78px;height:19px">0</div>
<div class="g" style="left:1462px;top:279px;width:83px;height:19px">0</div>
<div class="g" style="left:1548px;top:279px;width:105px;height:19px">0</div>
<div class="g" style="left:1656px;top:279px;width:57px;height:19px">1500</div>
<div class="g" style="left:1716px;top:279px;width:68px;height:19px">NONE</div>
<div class="g" style="left:6px;top:299px;width:26.5px;height:19px;text-align:right">6</div>
<div class="g" style="left:6px;top:319px;width:26.5px;height:18px;text-align:right">7</div>
<div class="g" style="left:36.5px;top:319px;width:400px;height:18px">#Devourer Mega-Carrier</div>
<div class="g" style="left:6px;top:339px;width:26.5px;height:18px;text-align:right">8</div>
<div class="g" style="left:36.5px;top:339px;width:147px;height:18px"><span class="cj">吞噬者</span></div>
<div class="g" style="left:188px;top:339px;width:160px;height:18px">dom+devourer</div>
<div class="g" style="left:351px;top:339px;width:77px;height:18px"><span class="cj">改装航母</span></div>
<div class="g" style="left:431px;top:339px;width:116px;height:18px"><span class="cj">开拓者</span></div>
<div class="g" style="left:550px;top:339px;width:82px;height:18px">burndrive</div>
<div class="g" style="left:635px;top:339px;width:57px;height:18px">100</div>
<div class="g" style="left:695px;top:339px;width:57px;height:18px">75000</div>
<div class="g" style="left:755px;top:339px;width:78px;height:18px">1600</div>
<div class="g" style="left:836px;top:339px;width:57px;height:18px">10000</div>
<div class="g" style="left:959px;top:339px;width:92px;height:18px">1000</div>
<div class="g" style="left:1054px;top:339px;width:100px;height:18px">280</div>
<div class="g" style="left:1157px;top:339px;width:72px;height:18px">8</div>
<div class="g" style="left:1232px;top:339px;width:67px;height:18px">5</div>
<div class="g" style="left:1302px;top:339px;width:76px;height:18px">5</div>
<div class="g" style="left:1381px;top:339px;width:78px;height:18px">5</div>
<div class="g" style="left:1462px;top:339px;width:83px;height:18px">5</div>
<div class="g" style="left:1548px;top:339px;width:105px;height:18px">5</div>
<div class="g" style="left:1656px;top:339px;width:57px;height:18px">12500</div>
<div class="g" style="left:1716px;top:339px;width:68px;height:18px">NONE</div>
<div class="g" style="left:6px;top:359px;width:26.5px;height:18px;text-align:right">9</div>
<div class="g" style="left:188px;top:359px;width:160px;height:18px">dom+dev_bottom_left_1</div>
<div class="g" style="left:351px;top:359px;width:77px;height:18px"><span class="cj">模块</span></div>
<div class="g" style="left:635px;top:359px;width:57px;height:18px">1</div>
<div class="g" style="left:695px;top:359px;width:57px;height:18px">9000</div>
<div class="g" style="left:755px;top:359px;width:78px;height:18px">1500</div>
<div class="g" style="left:836px;top:359px;width:57px;height:18px">2500</div>
<div class="g" style="left:959px;top:359px;width:92px;height:18px">350</div>
<div class="g" style="left:1054px;top:359px;width:100px;height:18px">50</div>
<div class="g" style="left:1232px;top:359px;width:67px;height:18px">0</div>
<div class="g" style="left:1302px;top:359px;width:76px;height:18px">0</div>
<div class="g" style="left:1381px;top:359px;width:78px;height:18px">0</div>
<div class="g" style="left:1462px;top:359px;width:83px;height:18px">4</div>
<div class="g" style="left:1548px;top:359px;width:105px;height:18px">4</div>
<div class="g" style="left:1656px;top:359px;width:57px;height:18px">500</div>
<div class="g" style="left:1716px;top:359px;width:68px;height:18px">NONE</div>
<div class="g" style="left:6px;top:379px;width:26.5px;height:18px;text-align:right">10</div>
<div class="g" style="left:188px;top:379px;width:160px;height:18px">dom+dev_bottom_right_1</div>
<div class="g" style="left:351px;top:379px;width:77px;height:18px"><span class="cj">模块</span></div>
<div class="g" style="left:635px;top:379px;width:57px;height:18px">1</div>
<div class="g" style="left:695px;top:379px;width:57px;height:18px">9000</div>
<div class="g" style="left:755px;top:379px;width:78px;height:18px">1500</div>
<div class="g" style="left:836px;top:379px;width:57px;height:18px">2500</div>
<div class="g" style="left:959px;top:379px;width:92px;height:18px">350</div>
<div class="g" style="left:1054px;top:379px;width:100px;height:18px">50</div>
<div class="g" style="left:1232px;top:379px;width:67px;height:18px">0</div>
<div class="g" style="left:1302px;top:379px;width:76px;height:18px">0</div>
<div class="g" style="left:1381px;top:379px;width:78px;height:18px">0</div>
<div class="g" style="left:1462px;top:379px;width:83px;height:18px">4</div>
<div class="g" style="left:1548px;top:379px;width:105px;height:18px">4</div>
<div class="g" style="left:1656px;top:379px;width:57px;height:18px">500</div>
<div class="g" style="left:1716px;top:379px;width:68px;height:18px">NONE</div>
<div class="g" style="left:6px;top:399px;width:26.5px;height:18px;text-align:right">11</div>
<div class="g" style="left:188px;top:399px;width:160px;height:18px">dom+dev_left_1</div>
<div class="g" style="left:351px;top:399px;width:77px;height:18px"><span class="cj">模块</span></div>
<div class="g" style="left:635px;top:399px;width:57px;height:18px">1</div>
<div class="g" style="left:695px;top:399px;width:57px;height:18px">20000</div>
<div class="g" style="left:755px;top:399px;width:78px;height:18px">1600</div>
<div class="g" style="left:836px;top:399px;width:57px;height:18px">3500</div>
<div class="g" style="left:959px;top:399px;width:92px;height:18px">650</div>
<div class="g" style="left:1054px;top:399px;width:100px;height:18px">110</div>
<div class="g" style="left:1157px;top:399px;width:72px;height:18px">2</div>
<div class="g" style="left:1232px;top:399px;width:67px;height:18px">0</div>
<div class="g" style="left:1302px;top:399px;width:76px;height:18px">0</div>
<div class="g" style="left:1381px;top:399px;width:78px;height:18px">0</div>
<div class="g" style="left:1462px;top:399px;width:83px;height:18px">4</div>
<div class="g" style="left:1548px;top:399px;width:105px;height:18px">4</div>
<div class="g" style="left:1656px;top:399px;width:57px;height:18px">950</div>
<div class="g" style="left:1716px;top:399px;width:68px;height:18px">NONE</div>
<div class="g" style="left:6px;top:419px;width:26.5px;height:18px;text-align:right">12</div>
<div class="g" style="left:188px;top:419px;width:160px;height:18px">dom+dev_right_1</div>
<div class="g" style="left:351px;top:419px;width:77px;height:18px"><span class="cj">模块</span></div>
<div class="g" style="left:635px;top:419px;width:57px;height:18px">1</div>
<div class="g" style="left:695px;top:419px;width:57px;height:18px">22500</div>
<div class="g" style="left:755px;top:419px;width:78px;height:18px">1600</div>
<div class="g" style="left:836px;top:419px;width:57px;height:18px">3300</div>
<div class="g" style="left:959px;top:419px;width:92px;height:18px">650</div>
<div class="g" style="left:1054px;top:419px;width:100px;height:18px">100</div>
<div class="g" style="left:1232px;top:419px;width:67px;height:18px">0</div>
<div class="g" style="left:1302px;top:419px;width:76px;height:18px">0</div>
<div class="g" style="left:1381px;top:419px;width:78px;height:18px">0</div>
<div class="g" style="left:1462px;top:419px;width:83px;height:18px">4</div>
<div class="g" style="left:1548px;top:419px;width:105px;height:18px">4</div>
<div class="g" style="left:1656px;top:419px;width:57px;height:18px">900</div>
<div class="g" style="left:1716px;top:419px;width:68px;height:18px">NONE</div>
<div class="g" style="left:6px;top:438px;width:26.5px;height:19px;text-align:right">13</div>
<div class="g" style="left:6px;top:458px;width:26.5px;height:19px;text-align:right">14</div>
<div class="g" style="left:6px;top:478px;width:26.5px;height:19px;text-align:right">15</div>
<div class="g" style="left:36.5px;top:478px;width:400px;height:19px"># Capital</div>
<div class="g" style="left:6px;top:498px;width:26.5px;height:19px;text-align:right">16</div>
<div class="g" style="left:36.5px;top:498px;width:147px;height:19px"><span class="cj">人之领战列舰</span></div>
<div class="g" style="left:188px;top:498px;width:160px;height:19px">dom+dreadnought</div>
<div class="g" style="left:351px;top:498px;width:77px;height:19px"><span class="cj">无人战舰</span></div>
<div class="g" style="left:431px;top:498px;width:116px;height:19px"><span class="cj">开拓者</span></div>
<div class="g" style="left:550px;top:498px;width:82px;height:19px">burndrive</div>
<div class="g" style="left:635px;top:498px;width:57px;height:19px">28</div>
<div class="g" style="left:695px;top:498px;width:57px;height:19px">22000</div>
<div class="g" style="left:755px;top:498px;width:78px;height:19px">1500</div>
<div class="g" style="left:836px;top:498px;width:57px;height:19px">9000</div>
<div class="g" style="left:959px;top:498px;width:92px;height:19px">750</div>
<div class="g" style="left:1054px;top:498px;width:100px;height:19px">240</div>
<div class="g" style="left:1157px;top:498px;width:72px;height:19px">4</div>
<div class="g" style="left:1232px;top:498px;width:67px;height:19px">18</div>
<div class="g" style="left:1302px;top:498px;width:76px;height:19px">12</div>
<div class="g" style="left:1381px;top:498px;width:78px;height:19px">12</div>
<div class="g" style="left:1462px;top:498px;width:83px;height:19px">8</div>
<div class="g" style="left:1548px;top:498px;width:105px;height:19px">12</div>
<div class="g" style="left:1656px;top:498px;width:57px;height:19px">4800</div>
<div class="g" style="left:1716px;top:498px;width:68px;height:19px">NONE</div>
<div class="g" style="left:6px;top:518px;width:26.5px;height:19px;text-align:right">17</div>
<div class="g" style="left:36.5px;top:518px;width:147px;height:19px"><span class="cj">人之领无人超级搬运</span>...</div>
<div class="g" style="left:188px;top:518px;width:160px;height:19px">dom+mega_hauler</div>
<div class="g" style="left:351px;top:518px;width:77px;height:19px"><span class="cj">无人货舰</span></div>
<div class="g" style="left:431px;top:518px;width:116px;height:19px"><span class="cj">开拓者</span></div>
<div class="g" style="left:550px;top:518px;width:82px;height:19px">flarelauncher</div>
<div class="g" style="left:635px;top:518px;width:57px;height:19px">10</div>
<div class="g" style="left:695px;top:518px;width:57px;height:19px">20000</div>
<div class="g" style="left:755px;top:518px;width:78px;height:19px">1400</div>
<div class="g" style="left:836px;top:518px;width:57px;height:19px">2200</div>
<div class="g" style="left:959px;top:518px;width:92px;height:19px">250</div>
<div class="g" style="left:1054px;top:518px;width:100px;height:19px">100</div>
<div class="g" style="left:1157px;top:518px;width:72px;height:19px">2</div>
<div class="g" style="left:1232px;top:518px;width:67px;height:19px">15</div>
<div class="g" style="left:1302px;top:518px;width:76px;height:19px">5</div>
<div class="g" style="left:1381px;top:518px;width:78px;height:19px">5</div>
<div class="g" style="left:1462px;top:518px;width:83px;height:19px">6</div>
<div class="g" style="left:1548px;top:518px;width:105px;height:19px">10</div>
<div class="g" style="left:1656px;top:518px;width:57px;height:19px">4900</div>
<div class="g" style="left:1716px;top:518px;width:68px;height:19px">NONE</div>
<div class="g" style="left:6px;top:538px;width:26.5px;height:19px;text-align:right">18</div>
<div class="g" style="left:36.5px;top:538px;width:147px;height:19px"><span class="cj">人之领改装型普罗米</span>...</div>
<div class="g" style="left:188px;top:538px;width:160px;height:19px">dom+prometheus</div>
<div class="g" style="left:351px;top:538px;width:77px;height:19px"><span class="cj">无人油轮</span></div>
<div class="g" style="left:431px;top:538px;width:116px;height:19px"><span class="cj">开拓者</span></div>
<div class="g" style="left:550px;top:538px;width:82px;height:19px">flarelauncher</div>
<div class="g" style="left:635px;top:538px;width:57px;height:19px">14</div>
<div class="g" style="left:695px;top:538px;width:57px;height:19px">12000</div>
<div class="g" style="left:755px;top:538px;width:78px;height:19px">1300</div>
<div class="g" style="left:836px;top:538px;width:57px;height:19px">2000</div>
<div class="g" style="left:959px;top:538px;width:92px;height:19px">250</div>
<div class="g" style="left:1054px;top:538px;width:100px;height:19px">100</div>
<div class="g" style="left:1157px;top:538px;width:72px;height:19px">1</div>
<div class="g" style="left:1232px;top:538px;width:67px;height:19px">25</div>
<div class="g" style="left:1302px;top:538px;width:76px;height:19px">10</div>
<div class="g" style="left:1381px;top:538px;width:78px;height:19px">5</div>
<div class="g" style="left:1462px;top:538px;width:83px;height:19px">4</div>
<div class="g" style="left:1548px;top:538px;width:105px;height:19px">4</div>
<div class="g" style="left:1656px;top:538px;width:57px;height:19px">4200</div>
<div class="g" style="left:1716px;top:538px;width:68px;height:19px">NONE</div>
<div class="g" style="left:6px;top:558px;width:26.5px;height:18px;text-align:right">19</div>
<div class="g" style="left:36.5px;top:558px;width:147px;height:18px"><span class="cj">人之领改装型阿特拉</span>...</div>
<div class="g" style="left:188px;top:558px;width:160px;height:18px">dom+atlas</div>
<div class="g" style="left:351px;top:558px;width:77px;height:18px"><span class="cj">无人货舰</span></div>
<div class="g" style="left:431px;top:558px;width:116px;height:18px"><span class="cj">开拓者</span></div>
<div class="g" style="left:550px;top:558px;width:82px;height:18px">burndrive</div>
<div class="g" style="left:635px;top:558px;width:57px;height:18px">14</div>
<div class="g" style="left:695px;top:558px;width:57px;height:18px">15000</div>
<div class="g" style="left:755px;top:558px;width:78px;height:18px">1400</div>
<div class="g" style="left:836px;top:558px;width:57px;height:18px">4000</div>
<div class="g" style="left:959px;top:558px;width:92px;height:18px">450</div>
<div class="g" style="left:1054px;top:558px;width:100px;height:18px">100</div>
<div class="g" style="left:1232px;top:558px;width:67px;height:18px">20</div>
<div class="g" style="left:1302px;top:558px;width:76px;height:18px">5</div>
<div class="g" style="left:1381px;top:558px;width:78px;height:18px">2</div>
<div class="g" style="left:1462px;top:558px;width:83px;height:18px">3</div>
<div class="g" style="left:1548px;top:558px;width:105px;height:18px">2</div>
<div class="g" style="left:1656px;top:558px;width:57px;height:18px">5000</div>
<div class="g" style="left:1716px;top:558px;width:68px;height:18px">NONE</div>
<div class="g" style="left:6px;top:578px;width:26.5px;height:18px;text-align:right">20</div>
<div class="g" style="left:36.5px;top:578px;width:147px;height:18px"><span class="cj">运作调查舰</span></div>
<div class="g" style="left:188px;top:578px;width:160px;height:18px">dom+surveyship</div>
<div class="g" style="left:351px;top:578px;width:77px;height:18px"><span class="cj">勘探舰</span></div>
<div class="g" style="left:431px;top:578px;width:116px;height:18px"><span class="cj">开拓者</span></div>
<div class="g" style="left:550px;top:578px;width:82px;height:18px">reservewing</div>
<div class="g" style="left:635px;top:578px;width:57px;height:18px">30</div>
<div class="g" style="left:695px;top:578px;width:57px;height:18px">26000</div>
<div class="g" style="left:755px;top:578px;width:78px;height:18px">1300</div>
<div class="g" style="left:836px;top:578px;width:57px;height:18px">6000</div>
<div class="g" style="left:959px;top:578px;width:92px;height:18px">500</div>
<div class="g" style="left:1054px;top:578px;width:100px;height:18px">120</div>
<div class="g" style="left:1157px;top:578px;width:72px;height:18px">4</div>
<div class="g" style="left:1232px;top:578px;width:67px;height:18px">10</div>
<div class="g" style="left:1302px;top:578px;width:76px;height:18px">10</div>
<div class="g" style="left:1381px;top:578px;width:78px;height:18px">10</div>
<div class="g" style="left:1462px;top:578px;width:83px;height:18px">7</div>
<div class="g" style="left:1548px;top:578px;width:105px;height:18px">10</div>
<div class="g" style="left:1656px;top:578px;width:57px;height:18px">4750</div>
<div class="g" style="left:1716px;top:578px;width:68px;height:18px">NONE</div>
<div class="g" style="left:6px;top:597px;width:26.5px;height:19px;text-align:right">21</div>
<div class="g" style="left:6px;top:617px;width:26.5px;height:19px;text-align:right">22</div>
<div class="g" style="left:6px;top:637px;width:26.5px;height:19px;text-align:right">23</div>
<div class="g" style="left:6px;top:657px;width:26.5px;height:19px;text-align:right">24</div>
<div class="g" style="left:6px;top:677px;width:26.5px;height:19px;text-align:right">25</div>
<div class="g" style="left:36.5px;top:677px;width:400px;height:19px"># Cruiser</div>
<div class="g" style="left:6px;top:697px;width:26.5px;height:19px;text-align:right">26</div>
<div class="g" style="left:36.5px;top:697px;width:147px;height:19px"><span class="cj">装载者</span></div>
<div class="g" style="left:188px;top:697px;width:160px;height:19px">dom+loader</div>
<div class="g" style="left:351px;top:697px;width:77px;height:19px"><span class="cj">无人货舰</span></div>
<div class="g" style="left:431px;top:697px;width:116px;height:19px"><span class="cj">开拓者</span></div>
<div class="g" style="left:550px;top:697px;width:82px;height:19px">burndrive</div>
<div class="g" style="left:635px;top:697px;width:57px;height:19px">15</div>
<div class="g" style="left:695px;top:697px;width:57px;height:19px">13000</div>
<div class="g" style="left:755px;top:697px;width:78px;height:19px">1700</div>
<div class="g" style="left:836px;top:697px;width:57px;height:19px">5000</div>
<div class="g" style="left:959px;top:697px;width:92px;height:19px">280</div>
<div class="g" style="left:1054px;top:697px;width:100px;height:19px">90</div>
<div class="g" style="left:1232px;top:697px;width:67px;height:19px">35</div>
<div class="g" style="left:1302px;top:697px;width:76px;height:19px">20</div>
<div class="g" style="left:1381px;top:697px;width:78px;height:19px">10</div>
<div class="g" style="left:1462px;top:697px;width:83px;height:19px">12</div>
<div class="g" style="left:1548px;top:697px;width:105px;height:19px">10</div>
<div class="g" style="left:1656px;top:697px;width:57px;height:19px">3000</div>
<div class="g" style="left:1716px;top:697px;width:68px;height:19px">NONE</div>
<div class="g" style="left:6px;top:717px;width:26.5px;height:19px;text-align:right">27</div>
<div class="g" style="left:36.5px;top:717px;width:147px;height:19px"><span class="cj">弥诺陶洛斯</span></div>
<div class="g" style="left:188px;top:717px;width:160px;height:19px">dom+minotaur</div>
<div class="g" style="left:351px;top:717px;width:77px;height:19px"><span class="cj">无人机</span></div>
<div class="g" style="left:431px;top:717px;width:116px;height:19px"><span class="cj">开拓者</span></div>
<div class="g" style="left:550px;top:717px;width:82px;height:19px">dom+forge...</div>
<div class="g" style="left:635px;top:717px;width:57px;height:19px">20</div>
<div class="g" style="left:695px;top:717px;width:57px;height:19px">12000</div>
<div class="g" style="left:755px;top:717px;width:78px;height:19px">1500</div>
<div class="g" style="left:836px;top:717px;width:57px;height:19px">7500</div>
<div class="g" style="left:959px;top:717px;width:92px;height:19px">300</div>
<div class="g" style="left:1054px;top:717px;width:100px;height:19px">95</div>
<div class="g" style="left:1157px;top:717px;width:72px;height:19px">2</div>
<div class="g" style="left:1232px;top:717px;width:67px;height:19px">45</div>
<div class="g" style="left:1302px;top:717px;width:76px;height:19px">30</div>
<div class="g" style="left:1381px;top:717px;width:78px;height:19px">20</div>
<div class="g" style="left:1462px;top:717px;width:83px;height:19px">20</div>
<div class="g" style="left:1548px;top:717px;width:105px;height:19px">20</div>
<div class="g" style="left:1656px;top:717px;width:57px;height:19px">3200</div>
<div class="g" style="left:1716px;top:717px;width:68px;height:19px">FRONT</div>
<div class="g" style="left:6px;top:737px;width:26.5px;height:19px;text-align:right">28</div>
<div class="g" style="left:36.5px;top:737px;width:147px;height:19px"><span class="cj">运作探测器</span></div>
<div class="g" style="left:188px;top:737px;width:160px;height:19px">dom+surveyprobe</div>
<div class="g" style="left:351px;top:737px;width:77px;height:19px"><span class="cj">勘探舰</span></div>
<div class="g" style="left:431px;top:737px;width:116px;height:19px"><span class="cj">开拓者</span></div>
<div class="g" style="left:550px;top:737px;width:82px;height:19px">flarelauncher</div>
<div class="g" style="left:635px;top:737px;width:57px;height:19px">20</div>
<div class="g" style="left:695px;top:737px;width:57px;height:19px">13000</div>
<div class="g" style="left:755px;top:737px;width:78px;height:19px">1000</div>
<div class="g" style="left:836px;top:737px;width:57px;height:19px">4000</div>
<div class="g" style="left:959px;top:737px;width:92px;height:19px">400</div>
<div class="g" style="left:1054px;top:737px;width:100px;height:19px">75</div>
<div class="g" style="left:1157px;top:737px;width:72px;height:19px">2</div>
<div class="g" style="left:1232px;top:737px;width:67px;height:19px">30</div>
<div class="g" style="left:1302px;top:737px;width:76px;height:19px">30</div>
<div class="g" style="left:1381px;top:737px;width:78px;height:19px">30</div>
<div class="g" style="left:1462px;top:737px;width:83px;height:19px">25</div>
<div class="g" style="left:1548px;top:737px;width:105px;height:19px">30</div>
<div class="g" style="left:1656px;top:737px;width:57px;height:19px">3400</div>
<div class="g" style="left:1716px;top:737px;width:68px;height:19px">NONE</div>
<div class="g" style="left:6px;top:757px;width:26.5px;height:19px;text-align:right">29</div>
<div class="g" style="left:36.5px;top:757px;width:147px;height:19px"><span class="cj">忒修斯</span></div>
<div class="g" style="left:188px;top:757px;width:160px;height:19px">dom+theseus</div>
<div class="g" style="left:351px;top:757px;width:77px;height:19px"><span class="cj">无人机</span></div>
<div class="g" style="left:431px;top:757px;width:116px;height:19px"><span class="cj">开拓者</span></div>
<div class="g" style="left:550px;top:757px;width:82px;height:19px">reservewing</div>
<div class="g" style="left:635px;top:757px;width:57px;height:19px">20</div>
<div class="g" style="left:695px;top:757px;width:57px;height:19px">12000</div>
<div class="g" style="left:755px;top:757px;width:78px;height:19px">1250</div>
<div class="g" style="left:836px;top:757px;width:57px;height:19px">5000</div>
<div class="g" style="left:959px;top:757px;width:92px;height:19px">320</div>
<div class="g" style="left:1054px;top:757px;width:100px;height:19px">85</div>
<div class="g" style="left:1157px;top:757px;width:72px;height:19px">2</div>
<div class="g" style="left:1232px;top:757px;width:67px;height:19px">30</div>
<div class="g" style="left:1302px;top:757px;width:76px;height:19px">25</div>
<div class="g" style="left:1381px;top:757px;width:78px;height:19px">25</div>
<div class="g" style="left:1462px;top:757px;width:83px;height:19px">20</div>
<div class="g" style="left:1548px;top:757px;width:105px;height:19px">20</div>
<div class="g" style="left:1656px;top:757px;width:57px;height:19px">3200</div>
<div class="g" style="left:1716px;top:757px;width:68px;height:19px">NONE</div>
<div class="g" style="left:6px;top:776px;width:26.5px;height:19px;text-align:right">30</div>
<div class="g" style="left:36.5px;top:776px;width:147px;height:19px"><span class="cj">鸢尾</span></div>
<div class="g" style="left:188px;top:776px;width:160px;height:19px">dom+iris</div>
<div class="g" style="left:351px;top:776px;width:77px;height:19px"><span class="cj">无人机</span></div>
<div class="g" style="left:431px;top:776px;width:116px;height:19px"><span class="cj">开拓者</span></div>
<div class="g" style="left:550px;top:776px;width:82px;height:19px">reservewing</div>
<div class="g" style="left:635px;top:776px;width:57px;height:19px">17</div>
<div class="g" style="left:695px;top:776px;width:57px;height:19px">10000</div>
<div class="g" style="left:755px;top:776px;width:78px;height:19px">1100</div>
<div class="g" style="left:836px;top:776px;width:57px;height:19px">4000</div>
<div class="g" style="left:959px;top:776px;width:92px;height:19px">290</div>
<div class="g" style="left:1054px;top:776px;width:100px;height:19px">70</div>
<div class="g" style="left:1157px;top:776px;width:72px;height:19px">3</div>
<div class="g" style="left:1232px;top:776px;width:67px;height:19px">50</div>
<div class="g" style="left:1302px;top:776px;width:76px;height:19px">35</div>
<div class="g" style="left:1381px;top:776px;width:78px;height:19px">35</div>
<div class="g" style="left:1462px;top:776px;width:83px;height:19px">20</div>
<div class="g" style="left:1548px;top:776px;width:105px;height:19px">20</div>
<div class="g" style="left:1656px;top:776px;width:57px;height:19px">2600</div>
<div class="g" style="left:1716px;top:776px;width:68px;height:19px">NONE</div>
<div class="g" style="left:6px;top:796px;width:26.5px;height:19px;text-align:right">31</div>
<div class="g" style="left:36.5px;top:796px;width:147px;height:19px"><span class="cj">箭猪</span></div>
<div class="g" style="left:188px;top:796px;width:160px;height:19px">dom+porcupine</div>
<div class="g" style="left:351px;top:796px;width:77px;height:19px"><span class="cj">点防御无</span>...</div>
<div class="g" style="left:431px;top:796px;width:116px;height:19px"><span class="cj">开拓者</span></div>
<div class="g" style="left:550px;top:796px;width:82px;height:19px">ammofeed</div>
<div class="g" style="left:635px;top:796px;width:57px;height:19px">22</div>
<div class="g" style="left:695px;top:796px;width:57px;height:19px">13000</div>
<div class="g" style="left:755px;top:796px;width:78px;height:19px">1200</div>
<div class="g" style="left:836px;top:796px;width:57px;height:19px">5000</div>
<div class="g" style="left:959px;top:796px;width:92px;height:19px">300</div>
<div class="g" style="left:1054px;top:796px;width:100px;height:19px">80</div>
<div class="g" style="left:1232px;top:796px;width:67px;height:19px">25</div>
<div class="g" style="left:1302px;top:796px;width:76px;height:19px">20</div>
<div class="g" style="left:1381px;top:796px;width:78px;height:19px">10</div>
<div class="g" style="left:1462px;top:796px;width:83px;height:19px">20</div>
<div class="g" style="left:1548px;top:796px;width:105px;height:19px">20</div>
<div class="g" style="left:1656px;top:796px;width:57px;height:19px">3300</div>
<div class="g" style="left:1716px;top:796px;width:68px;height:19px">NONE</div>
<div class="g" style="left:6px;top:816px;width:26.5px;height:19px;text-align:right">32</div>
<div class="g" style="left:36.5px;top:816px;width:147px;height:19px"><span class="cj">收割者</span></div>
<div class="g" style="left:188px;top:816px;width:160px;height:19px">dom+harvester</div>
<div class="g" style="left:351px;top:816px;width:77px;height:19px"><span class="cj">无人采矿机</span></div>
<div class="g" style="left:431px;top:816px;width:116px;height:19px"><span class="cj">开拓者</span></div>
<div class="g" style="left:550px;top:816px;width:82px;height:19px">burndrive</div>
<div class="g" style="left:635px;top:816px;width:57px;height:19px">15</div>
<div class="g" style="left:695px;top:816px;width:57px;height:19px">11000</div>
<div class="g" style="left:755px;top:816px;width:78px;height:19px">1150</div>
<div class="g" style="left:836px;top:816px;width:57px;height:19px">4250</div>
<div class="g" style="left:959px;top:816px;width:92px;height:19px">400</div>
<div class="g" style="left:1054px;top:816px;width:100px;height:19px">75</div>
<div class="g" style="left:1157px;top:816px;width:72px;height:19px">1</div>
<div class="g" style="left:1232px;top:816px;width:67px;height:19px">60</div>
<div class="g" style="left:1302px;top:816px;width:76px;height:19px">35</div>
<div class="g" style="left:1381px;top:816px;width:78px;height:19px">35</div>
<div class="g" style="left:1462px;top:816px;width:83px;height:19px">20</div>
<div class="g" style="left:1548px;top:816px;width:105px;height:19px">20</div>
<div class="g" style="left:1656px;top:816px;width:57px;height:19px">2750</div>
<div class="g" style="left:1716px;top:816px;width:68px;height:19px">NONE</div>
<div class="g" style="left:6px;top:836px;width:26.5px;height:19px;text-align:right">33</div>
<div class="g" style="left:6px;top:856px;width:26.5px;height:19px;text-align:right">34</div>
<div class="g" style="left:6px;top:876px;width:26.5px;height:19px;text-align:right">35</div>
<div class="g" style="left:36.5px;top:876px;width:400px;height:19px"># destroyer</div>
<div class="g" style="left:6px;top:896px;width:26.5px;height:19px;text-align:right">36</div>
<div class="g" style="left:36.5px;top:896px;width:147px;height:19px"><span class="cj">斗牛犬</span>MKII</div>
<div class="g" style="left:188px;top:896px;width:160px;height:19px">dom+bulldogmkii</div>
<div class="g" style="left:351px;top:896px;width:77px;height:19px"><span class="cj">无人机</span></div>
<div class="g" style="left:431px;top:896px;width:116px;height:19px"><span class="cj">开拓者</span></div>
<div class="g" style="left:550px;top:896px;width:82px;height:19px">ammofeed</div>
<div class="g" style="left:635px;top:896px;width:57px;height:19px">12</div>
<div class="g" style="left:695px;top:896px;width:57px;height:19px">5000</div>
<div class="g" style="left:755px;top:896px;width:78px;height:19px">1200</div>
<div class="g" style="left:836px;top:896px;width:57px;height:19px">4000</div>
<div class="g" style="left:959px;top:896px;width:92px;height:19px">260</div>
<div class="g" style="left:1054px;top:896px;width:100px;height:19px">70</div>
<div class="g" style="left:1232px;top:896px;width:67px;height:19px">80</div>
<div class="g" style="left:1302px;top:896px;width:76px;height:19px">40</div>
<div class="g" style="left:1381px;top:896px;width:78px;height:19px">20</div>
<div class="g" style="left:1462px;top:896px;width:83px;height:19px">20</div>
<div class="g" style="left:1548px;top:896px;width:105px;height:19px">20</div>
<div class="g" style="left:1656px;top:896px;width:57px;height:19px">425</div>
<div class="g" style="left:1716px;top:896px;width:68px;height:19px">NONE</div>
<div class="g" style="left:6px;top:916px;width:26.5px;height:8px;text-align:right">37</div>
<div class="g" style="left:36.5px;top:916px;width:147px;height:8px"><span class="cj">运行者</span></div>
<div class="g" style="left:188px;top:916px;width:160px;height:8px">dom+campaigner</div>
<div class="g" style="left:351px;top:916px;width:77px;height:8px"><span class="cj">无人货舰</span></div>
<div class="g" style="left:431px;top:916px;width:116px;height:8px"><span class="cj">开拓者</span></div>
<div class="g" style="left:550px;top:916px;width:82px;height:8px">burndrive</div>
<div class="g" style="left:635px;top:916px;width:57px;height:8px">5</div>
<div class="g" style="left:695px;top:916px;width:57px;height:8px">3500</div>
<div class="g" style="left:755px;top:916px;width:78px;height:8px">900</div>
<div class="g" style="left:836px;top:916px;width:57px;height:8px">3500</div>
<div class="g" style="left:959px;top:916px;width:92px;height:8px">250</div>
<div class="g" style="left:1054px;top:916px;width:100px;height:8px">45</div>
<div class="g" style="left:1157px;top:916px;width:72px;height:8px">1</div>
<div class="g" style="left:1232px;top:916px;width:67px;height:8px">35</div>
<div class="g" style="left:1302px;top:916px;width:76px;height:8px">30</div>
<div class="g" style="left:1381px;top:916px;width:78px;height:8px">15</div>
<div class="g" style="left:1462px;top:916px;width:83px;height:8px">10</div>
<div class="g" style="left:1548px;top:916px;width:105px;height:8px">10</div>
<div class="g" style="left:1656px;top:916px;width:57px;height:8px">800</div>
<div class="g" style="left:1716px;top:916px;width:68px;height:8px">NONE</div>
<div style="position:absolute;left:33px;top:198px;width:153px;height:22px;border:2px solid #6a5ddc"></div>
<div style="position:absolute;left:1853px;top:179px;width:18px;height:762px;background:#fff"></div>
<div style="position:absolute;left:1855px;top:200px;width:15px;height:17px;background:#f0f0f0;border:1px solid #a8a8a8"></div>
<div style="position:absolute;left:1855px;top:217px;width:15px;height:202px;background:#f0f0f0;border:1px solid #a8a8a8"></div>
<div style="position:absolute;left:1855px;top:906px;width:15px;height:17px;background:#f0f0f0;border:1px solid #a8a8a8"></div>
<div style="position:absolute;left:6px;top:924px;width:1865px;height:17px;background:#fff"></div>
<div style="position:absolute;left:35px;top:925px;width:17px;height:15px;background:#f0f0f0;border:1px solid #a8a8a8"></div>
<div style="position:absolute;left:51px;top:925px;width:708px;height:15px;background:#f0f0f0;border:1px solid #a8a8a8"></div>
<div style="position:absolute;left:1836px;top:925px;width:17px;height:15px;background:#f0f0f0;border:1px solid #a8a8a8"></div>
<div style="position:absolute;left:5px;top:178px;width:1867px;height:764px;border:1px solid #a8a8a8"></div>
<div style="position:absolute;left:0px;top:947px;width:1920px;height:65px;background:linear-gradient(#e6e5f6,#f4f3fc)"></div>
<div class="t" id="f20" style="transform:scaleX(1.0551);transform-origin:0 0;left:51.58px;top:954.79px;font-size:15.6px;font-weight:400;color:#111;"><span class="u">Rons Data Edit</span> <b style="color:#8b0a0a">LITE</b> 100% free</div>
<div class="t" id="f21" style="transform:scaleX(1.0076);transform-origin:0 0;left:51.77px;top:973.66px;font-size:10.8px;font-weight:400;color:#111;">After evaluation, commercial entities are</div>
<div class="t" id="f22" style="transform:scaleX(1.0044);transform-origin:0 0;left:51.77px;top:987.56px;font-size:10.8px;font-weight:400;color:#111;">required to have a Pro license.</div>
<div class="t" id="f23" style="transform:scaleX(1.0768);transform-origin:0 0;left:328.48px;top:954.79px;font-size:15.6px;font-weight:400;color:#111;"><span class="u">We Value your Feedback</span></div>
<div class="t" id="f24" style="transform:scaleX(1.0058);transform-origin:0 0;left:333.63px;top:976.98px;font-size:14.2px;font-weight:400;color:#111;">Our products are strongly influenced by our customers. Please tell us what you need!</div>
<div class="t" id="f25" style="transform:scaleX(1.0987);transform-origin:0 0;left:1772.69px;top:954.63px;font-size:15.2px;font-weight:700;color:#111;"><span class="u0">Buy Now</span></div>
<div class="t" id="f26" style="transform:scaleX(1.0035);transform-origin:0 0;left:1682.87px;top:977.86px;font-size:10.8px;font-weight:400;color:#111;">Free 15 day Pro version available</div>
<div class="t" id="f27" style="transform:scaleX(1.0390);transform-origin:0 0;left:1747.08px;top:994.81px;font-size:10.5px;font-weight:400;color:#111;"><span class="u0">Start Free Trial Now</span></div>
<div style="position:absolute;left:0px;top:1012px;width:1920px;height:1px;background:#b8b8b8"></div>
<div style="position:absolute;left:0px;top:1013px;width:1920px;height:27px;background:#f0f0f0"></div>
<div class="t" id="f28" style="transform:scaleX(1.0566);transform-origin:0 0;left:9.82px;top:1020.64px;font-size:12px;font-weight:400;color:#000;">Messages: 1</div>
<div class="t" id="f29" style="transform:scaleX(1.0908);transform-origin:0 0;left:106.22px;top:1020.64px;font-size:12px;font-weight:700;color:#000;">Document</div>
<div class="t" id="f30" style="transform:scaleX(1.0569);transform-origin:0 0;left:173.72px;top:1020.64px;font-size:12px;font-weight:400;color:#000;">Columns: 54 Rows: 90</div>
<div class="t" id="f31" style="transform:scaleX(1.0171);transform-origin:0 0;left:312.02px;top:1020.64px;font-size:12px;font-weight:400;color:#000;">Status:</div>
<div class="t" id="f32" style="transform:scaleX(1.1348);transform-origin:0 0;left:390.72px;top:1020.64px;font-size:12px;font-weight:700;color:#000;">View</div>
<div class="t" id="f33" style="transform:scaleX(1.0602);transform-origin:0 0;left:424.82px;top:1020.64px;font-size:12px;font-weight:400;color:#000;">Columns: 54 Rows: 90</div>
<div class="t" id="f34" style="transform:scaleX(1.0457);transform-origin:0 0;left:1576.02px;top:1020.64px;font-size:12px;font-weight:700;color:#000;">Selection</div>
<div class="t" id="f35" style="transform:scaleX(1.0106);transform-origin:0 0;left:1635.52px;top:1020.64px;font-size:12px;font-weight:400;color:#000;">Cell: 1,1</div>
<div class="t" id="f36" style="transform:scaleX(1.0553);transform-origin:0 0;left:1689.52px;top:1020.64px;font-size:12px;font-weight:400;color:#000;">A2</div>
<div class="t" id="f37" style="transform:scaleX(1.0579);transform-origin:0 0;left:1713.72px;top:1020.64px;font-size:12px;font-weight:400;color:#000;">Count: 1</div>
<div class="t" id="f38" style="transform:scaleX(1.0402);transform-origin:0 0;left:1773.02px;top:1020.64px;font-size:12px;font-weight:400;color:#000;">Length: 15</div>
<div class="t" id="f39" style="transform:scaleX(1.1259);transform-origin:0 0;left:1857.82px;top:1020.64px;font-size:12px;font-weight:400;color:#000;">Total:</div>
<div style="position:absolute;left:101px;top:1017px;width:1px;height:19px;background:#5a5a5a"></div>
<div style="position:absolute;left:305px;top:1017px;width:1px;height:19px;background:#5a5a5a"></div>
<div style="position:absolute;left:386px;top:1017px;width:1px;height:19px;background:#5a5a5a"></div>
<div style="position:absolute;left:1685px;top:1017px;width:1px;height:19px;background:#5a5a5a"></div>
<div style="position:absolute;left:1709px;top:1017px;width:1px;height:19px;background:#5a5a5a"></div>
<div style="position:absolute;left:1766px;top:1017px;width:1px;height:19px;background:#5a5a5a"></div>
<div style="position:absolute;left:1851px;top:1017px;width:1px;height:19px;background:#5a5a5a"></div>
<svg style="position:absolute;left:0;top:0" width="1920" height="1040" fill="none" stroke-width="1">
<!-- app icon -->
<rect x="6.5" y="2.5" width="10.5" height="3" stroke="#3b2f6e" fill="#b3a9d6"/>
<path d="M6.5 5.5V6.5M17 5.5V6.5" stroke="#3b2f6e"/>
<rect x="2.5" y="7.5" width="10.5" height="9.5" stroke="#2d2452" fill="#fff"/>
<rect x="2.5" y="7.5" width="10.5" height="2" stroke="#3b2f6e" fill="#b3a9d6"/>
<path d="M3 12.5H12M6.5 10V17" stroke="#9b90c8"/>
<path d="M8 16.5L16.5 8" stroke="#1a6fc4" stroke-width="2.6"/>
<path d="M8 16.5L16.5 8" stroke="#7ac0f0" stroke-width="0.8"/>
<path d="M15.8 7.2L17.8 9.2" stroke="#e84040" stroke-width="2.2"/>
<path d="M7 17.5L8.5 15.5" stroke="#555" stroke-width="1"/>
<!-- window controls -->
<path d="M1800 11.5H1810" stroke="#333" stroke-width="1.1"/>
<rect x="1846.5" y="9.5" width="7" height="7" stroke="#333"/>
<path d="M1848.5 9.5V7.5H1855.5V14.5H1853.5" stroke="#333"/>
<path d="M1892 7L1902 17M1902 7L1892 17" stroke="#333" stroke-width="1.05"/>
<!-- notification close -->
<rect x="1893.5" y="98.5" width="15" height="15" stroke="#a8a8a8" fill="url(#gbtn)"/>
<path d="M1897.5 102.5L1904.5 109.5M1904.5 102.5L1897.5 109.5" stroke="#555"/>
<!-- tab icon -->
<path d="M19.5 160V155.5H27.5L31.5 159.5V170.5H25.5" stroke="#333" fill="#fff"/>
<path d="M27.5 155.5V159.5H31.5" stroke="#333"/>
<rect x="16.5" y="161.5" width="8" height="9" stroke="#1e88d0" fill="#fff"/>
<path d="M17 164.5H24M17 167.5H24M20.5 162V170" stroke="#bcdcf0"/>
<!-- tab close -->
<rect x="122.5" y="155.5" width="15" height="15" stroke="#a8a8a8" fill="url(#gbtn)"/>
<path d="M126.5 159.5L133.5 166.5M133.5 159.5L126.5 166.5" stroke="#555"/>
<defs><linearGradient id="gbtn" x1="0" y1="0" x2="0" y2="1"><stop offset="0" stop-color="#f4f4f4"/><stop offset="1" stop-color="#cdcdcd"/></linearGradient>
<linearGradient id="genv" x1="0" y1="0" x2="1" y2="1"><stop offset="0" stop-color="#f4f4f4"/><stop offset="1" stop-color="#b8b8b8"/></linearGradient>
<linearGradient id="glogoL" x1="0" y1="0" x2="1" y2="0"><stop offset="0" stop-color="#2a78d6"/><stop offset="1" stop-color="#3a90d8"/></linearGradient>
<linearGradient id="glogoR" x1="0" y1="0" x2="1" y2="0"><stop offset="0" stop-color="#4aa8d0"/><stop offset="1" stop-color="#5ac4cc"/></linearGradient>
</defs>
<!-- scrollbar arrows -->
<path d="M1859 211H1866L1862.5 207Z" fill="#111"/>
<path d="M1859 911.5H1866L1862.5 915.5Z" fill="#111"/>
<path d="M45.5 928.5V936.5L41.5 932.5Z" fill="#111"/>
<path d="M1842 928.5V936.5L1846 932.5Z" fill="#111"/>
<!-- sidebar: doc info -->
<path d="M1886 178V154H1897.5L1905 161.5V166" stroke="#333" stroke-width="1.8" fill="#fff"/>
<path d="M1886 178H1894" stroke="#333" stroke-width="1.8"/>
<path d="M1897.5 154V161.5H1905" stroke="#333" stroke-width="1.5"/>
<circle cx="1903.1" cy="172.9" r="7.1" fill="#b07aa6" stroke="#7b3a6e" stroke-width="1.3"/>
<path d="M1903.1 171V177.5M1903.1 168.3V169.6" stroke="#fff" stroke-width="1.8"/>
<!-- sidebar: windows -->
<path d="M1890.8 188.8H1910.2V206" stroke="#333" stroke-width="1.5"/>
<path d="M1906 206.2H1910.2" stroke="#333" stroke-width="1.5"/>
<rect x="1890.5" y="188" width="20.2" height="4.6" fill="#1fa84a"/>
<path d="M1892.5 190.3H1908.5" stroke="#a8dcb4" stroke-width="1"/>
<rect x="1883.9" y="197.5" width="19.3" height="17.6" stroke="#333" stroke-width="1.5" fill="#fff"/>
<rect x="1883.2" y="196.8" width="20.6" height="4.8" fill="#1fa84a"/>
<path d="M1885 199.2H1901.5" stroke="#a8dcb4" stroke-width="1"/>
<!-- sidebar: list -->
<rect x="1883.9" y="225.5" width="26.2" height="24.6" stroke="#333" stroke-width="1.5" fill="#fff"/>
<rect x="1883.2" y="224.8" width="27.6" height="5" fill="#1fa84a"/>
<path d="M1885 227.3H1909" stroke="#a8dcb4" stroke-width="1"/>
<g stroke="#333" stroke-width="1.3">
<path d="M1887 234.2H1888.4M1890 234.2H1894.8M1899.2 234.2H1900.6M1902.2 234.2H1907.2"/>
<path d="M1887 237.8H1888.4M1890 237.8H1894.8M1899.2 237.8H1900.6M1902.2 237.8H1907.2"/>
<path d="M1887 241.2H1888.4M1890 241.2H1894.8M1899.2 241.2H1900.6M1902.2 241.2H1907.2"/>
<path d="M1887 244.8H1888.4M1890 244.8H1894.8"/>
</g>
<!-- sidebar: grid -->
<rect x="1883.9" y="258.7" width="26.2" height="26.4" stroke="#333" stroke-width="1.5" fill="#fff"/>
<path d="M1892.5 260V266.5M1901.5 260V266.5M1892.5 277.5V284M1901.5 277.5V284M1885 267.5H1891.5M1902.5 267.5H1909M1885 276.3H1891.5M1902.5 276.3H1909" stroke="#999" stroke-width="1.1"/>
<rect x="1892.7" y="267.7" width="8.6" height="8.6" stroke="#1a6fc4" stroke-width="1.4" fill="#9ccbf0"/>
<!-- sidebar separator -->
<rect x="1879" y="291" width="34" height="3.6" fill="#dcdaf4"/>
<!-- sidebar: terminal -->
<rect x="1883.8" y="303.4" width="26.4" height="23" stroke="#333" stroke-width="1.5" fill="#fff"/>
<rect x="1883" y="302.7" width="28" height="7.4" fill="#0a5fb4"/>
<rect x="1884.6" y="304.2" width="24.8" height="4.2" fill="#9ad0f0"/>
<circle cx="1899.6" cy="306.3" r="0.9" fill="#222"/><circle cx="1903.1" cy="306.3" r="0.9" fill="#222"/><circle cx="1906.6" cy="306.3" r="0.9" fill="#222"/>
<path d="M1888.2 314.2L1892.7 318.5L1888.2 322.8" stroke="#333" stroke-width="1.4"/>
<path d="M1893.8 322.9H1900" stroke="#333" stroke-width="1.4"/>
<!-- sidebar bottom doc+grid -->
<path d="M1886.9 920.5V911.8H1901.2L1908.2 918.8V938.3H1898.5" stroke="#333" stroke-width="1.5" fill="#fff"/>
<path d="M1901.2 911.8V918.8H1908.2" stroke="#333" stroke-width="1.5"/>
<rect x="1881.7" y="922.2" width="14.4" height="16" stroke="#1e88d0" stroke-width="1.5" fill="#fff"/>
<path d="M1882.5 927.5H1895.5M1882.5 932.7H1895.5M1889 923V937.5" stroke="#bcdcf0" stroke-width="1.1"/>
<rect x="1912" y="907" width="3" height="35" fill="#8a80e2"/>
<!-- ad: app icon -->
<rect x="16.5" y="964.5" width="23.5" height="12" stroke="#3b2f6e" fill="#fff"/>
<rect x="16.5" y="964.5" width="23.5" height="4.5" stroke="#3b2f6e" fill="#b3a9d6" stroke-width="1.1"/>
<rect x="10.5" y="972.5" width="24" height="23" stroke="#2d2452" stroke-width="1.1" fill="#fff"/>
<rect x="10.5" y="972.5" width="24" height="4.5" stroke="#3b2f6e" fill="#b3a9d6" stroke-width="1.1"/>
<path d="M11 981.5H34M11 986H34M11 990.5H34M16.5 977V995.5M22.5 977V995.5M28.5 977V995.5" stroke="#8a7fbf" stroke-width="0.9"/>
<path d="M26 994L40.5 979.5" stroke="#2a6fb8" stroke-width="3.4"/>
<path d="M26 994L40.5 979.5" stroke="#8cc8f0" stroke-width="1.4"/>
<path d="M39.2 978.2L42 981" stroke="#e84a4a" stroke-width="3"/>
<path d="M24.5 995.8L26.6 992" stroke="#555" stroke-width="1.6"/>
<!-- ad: envelope -->
<path d="M293.2 968.3L319.9 971.7L319.9 991.2L294.2 987.4Z" fill="url(#genv)" stroke="#8c8c8c" stroke-width="1"/>
<path d="M293.6 968.6L303.6 982L319.6 972" stroke="#8c8c8c" stroke-width="1" fill="#fafafa"/>
<path d="M294.4 987L302 980M311 980.5L319.5 990.5" stroke="#d8d8d8" stroke-width="1"/>
<path d="M308.5 981C311 985 314 986.5 316.5 985V980.5L324 988.5L316.5 996V991.5C312 992 308.5 988 308.5 981Z" fill="#6ee05a" stroke="#2a9a2a" stroke-width="0.9"/>
<!-- ad: logo -->
<path d="M1870 964.5L1855 979.5L1870 995L1874 991L1863.3 979.5L1874 968.5Z" fill="url(#glogoL)" stroke="#123" stroke-width="0.8" stroke-linejoin="round"/>
<path d="M1894.2 964.5L1909.8 979.5L1894.2 995L1890.2 991L1900.6 979.5L1890.2 968.5Z" fill="url(#glogoR)" stroke="#123" stroke-width="0.8" stroke-linejoin="round"/>
<path d="M1874 987L1886.5 969.5L1891 969.5L1877 991Z" fill="#3a9ad8"/>
<path d="M1874 993.5V968.5H1885Q1890.8 968.5 1890.8 973.8Q1890.8 979.2 1885 979.2H1874M1883.2 979.2L1890.8 993.5" stroke="#34194f" stroke-width="6.2" stroke-linejoin="round"/>
<path d="M1874 993.5V968.5H1885Q1890.8 968.5 1890.8 973.8Q1890.8 979.2 1885 979.2H1874M1883.2 979.2L1890.8 993.5" stroke="#7443a4" stroke-width="4.6" stroke-linejoin="round"/>
<!-- status: carets, check -->
<path d="M86.3 1029L90 1025.3L93.7 1029" stroke="#3a5a8a" stroke-width="1.1"/>
<circle cx="359.6" cy="1026.5" r="5.9" stroke="#2db84d" stroke-width="1.1" fill="#fff"/>
<path d="M356.5 1026.5L358.9 1028.8L362.8 1024.2" stroke="#2db84d" stroke-width="1.1"/>
<path d="M371.2 1028.8L375 1025L378.8 1028.8" stroke="#3a5a8a" stroke-width="1.1"/>
<path d="M1836.3 1029L1840 1025.3L1843.7 1029" stroke="#3a5a8a" stroke-width="1.1"/>
<path d="M1897.3 1029L1901 1025.3L1904.7 1029" stroke="#3a5a8a" stroke-width="1.1"/>
</svg>
</body></html>
